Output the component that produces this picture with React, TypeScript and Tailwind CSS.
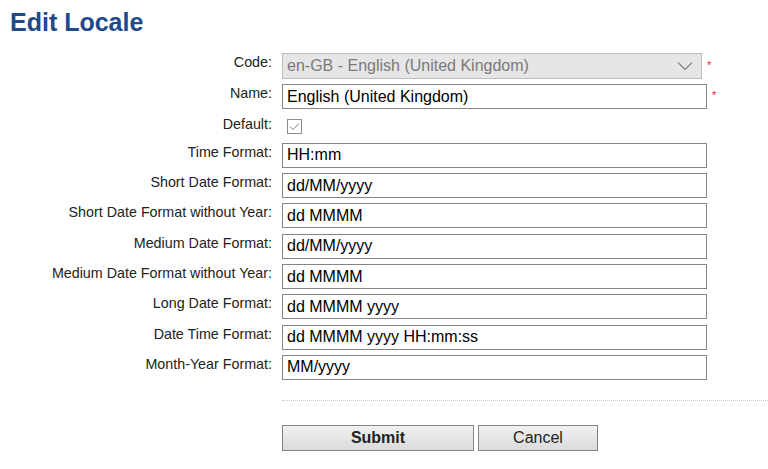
import React from "react";

const formats = [
  { label: "Time Format:", value: "HH:mm" },
  { label: "Short Date Format:", value: "dd/MM/yyyy" },
  { label: "Short Date Format without Year:", value: "dd MMMM" },
  { label: "Medium Date Format:", value: "dd/MM/yyyy" },
  { label: "Medium Date Format without Year:", value: "dd MMMM" },
  { label: "Long Date Format:", value: "dd MMMM yyyy" },
  { label: "Date Time Format:", value: "dd MMMM yyyy HH:mm:ss" },
  { label: "Month-Year Format:", value: "MM/yyyy" },
];

function Row({ label, children }: { label: string; children: React.ReactNode }) {
  return (
    <div className="flex items-start gap-[10px]">
      <label className="w-[272px] shrink-0 pt-[1px] text-right text-[14.3px] leading-[16px] text-[#222]">
        {label}
      </label>
      <div className="flex items-start">{children}</div>
    </div>
  );
}

export default function App() {
  return (
    <div className="min-h-[469px] bg-white font-['Liberation_Sans',Arial,sans-serif]">
      <h1 className="pl-[10px] pt-[8px] text-[25px] font-bold leading-[29px] text-[#1e4a8a]">
        Edit Locale
      </h1>

      <div className="mt-[16px] flex flex-col gap-[5.3px]">
        <Row label="Code:">
          <div className="flex h-[26px] w-[420px] items-center justify-between border border-[#bcbcbc] bg-[#e6e6e6] pl-[4px] pr-[8px] text-[16px] text-[#7a7a7a]">
            <span>en-GB - English (United Kingdom)</span>
            <svg width="16" height="10" viewBox="0 0 16 10" fill="none">
              <path d="M1 1.5 L8 8.5 L15 1.5" stroke="#8a8a8a" strokeWidth="1.3" />
            </svg>
          </div>
          <span className="ml-[5px] mt-[7px] text-[11px] leading-[11px] text-[#e8203a]">*</span>
        </Row>

        <Row label="Name:">
          <div className="flex h-[25px] w-[425px] items-center border border-[#858585] bg-white pl-[4px] text-[16px] text-black">
            English (United Kingdom)
          </div>
          <span className="ml-[5px] mt-[6px] text-[11px] leading-[11px] text-[#e8203a]">*</span>
        </Row>

        <div className="flex h-[23px] items-start gap-[10px]">
          <label className="w-[272px] shrink-0 pt-[1px] text-right text-[14.3px] leading-[16px] text-[#222]">
            Default:
          </label>
          <div className="ml-[5px] mt-[4px] flex h-[15px] w-[15px] items-center justify-center border border-[#8c8c8c] bg-white">
            <svg width="11" height="9" viewBox="0 0 11 9" fill="none">
              <path d="M1 4.5 L4 7.5 L10 1.5" stroke="#6d7f99" strokeWidth="1" />
            </svg>
          </div>
        </div>

        {formats.map((f) => (
          <Row key={f.label} label={f.label}>
            <div className="flex h-[25px] w-[425px] items-center border border-[#858585] bg-white pl-[4px] text-[16px] text-black">
              {f.value}
            </div>
          </Row>
        ))}
      </div>

      <div className="ml-[282px] mt-[20px] border-t border-dotted border-[#c8c8c8]" />

      <div className="ml-[282px] mt-[24px] flex gap-[4px]">
        <button className="h-[26px] w-[192px] border border-[#858585] bg-gradient-to-b from-[#f2f2f2] to-[#dadada] text-[16px] font-bold text-[#222]">
          Submit
        </button>
        <button className="h-[26px] w-[120px] border border-[#858585] bg-gradient-to-b from-[#f2f2f2] to-[#dadada] text-[16px] text-[#222]">
          Cancel
        </button>
      </div>
    </div>
  );
}
